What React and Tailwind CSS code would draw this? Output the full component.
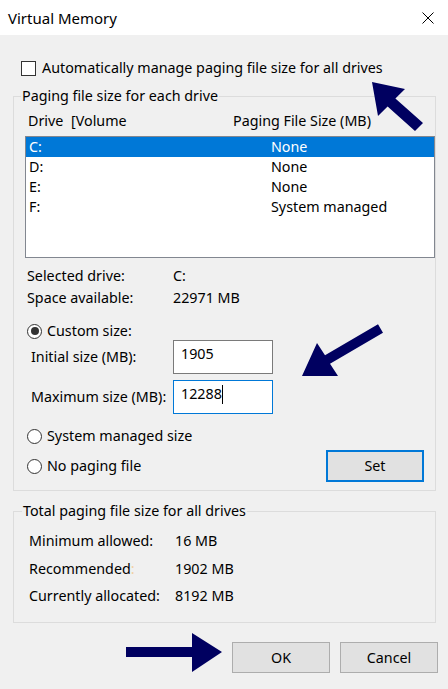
import React from "react";

const font = { fontFamily: '"Noto Sans", "Open Sans", sans-serif' };

const Radio = ({ checked }) => (
  <span className="flex size-[15px] shrink-0 items-center justify-center rounded-full border border-[#333] bg-white">
    {checked && <span className="size-[8px] rounded-full bg-[#333]" />}
  </span>
);

const drives = [
  ["C:", "None"],
  ["D:", "None"],
  ["E:", "None"],
  ["F:", "System managed"],
];

const Arrows = () => (
  <svg className="pointer-events-none absolute inset-0 h-full w-full" viewBox="0 0 448 689">
    <polygon fill="#000060" points="372,82 405,89 395.4,98.6 423,123 415,131 387.6,106.4 378,116" />
    <polygon fill="#000060" points="302,376 317,343 325,355.2 378,324.2 383,332.8 330,363.8 338,376" />
    <polygon fill="#000060" points="126,647 192,647 192,633 222,652 192,672 192,657 126,657" />
  </svg>
);

export default function App() {
  return (
    <div className="relative h-[689px] w-[448px] overflow-hidden bg-[#f0f0f0] text-[14.3px] leading-[20px] text-black" style={font}>
      {/* title bar */}
      <div className="flex h-[35px] items-center justify-between bg-white pl-[8px] pr-[14px]">
        <span className="text-[15px]">Virtual Memory</span>
        <svg width="12" height="12" viewBox="0 0 12 12">
          <path d="M0.5 0.5 L11.5 11.5 M11.5 0.5 L0.5 11.5" stroke="#000" strokeWidth="1" />
        </svg>
      </div>

      <div className="pt-[23px]">
        <label className="ml-[21px] flex h-[20px] items-center gap-[6px]">
          <span className="size-[15px] border border-[#333] bg-white" />
          <span>Automatically manage paging file size for all drives</span>
        </label>

        {/* paging file per drive */}
        <fieldset className="ml-[13px] mt-[8px] w-[423px] border border-[#dcdcdc]">
          <legend className="ml-[7px] px-[1px]">Paging file size for each drive</legend>
          <div className="pb-[8px] pl-[11px]">
            <div className="mt-[5px] flex h-[20px] items-center">
              <span className="ml-[3px] w-[43px]">Drive</span>
              <span className="w-[162px]">[Volume</span>
              <span>Paging File Size (MB)</span>
            </div>
            <div className="mt-[5px] h-[122px] w-[410px] border border-[#828790] bg-white">
              {drives.map(([d, s], i) => (
                <div
                  key={d}
                  className={
                    i === 0
                      ? "flex h-[20px] items-center bg-[#0078d7] text-white"
                      : "flex h-[20px] items-center"
                  }
                >
                  <span className="w-[245px] pl-[3px]">{d}</span>
                  <span>{s}</span>
                </div>
              ))}
            </div>

            <div className="mt-[8px] flex h-[20px] items-center">
              <span className="ml-[2px] w-[146px]">Selected drive:</span>
              <span>C:</span>
            </div>
            <div className="mt-[2px] flex h-[20px] items-center">
              <span className="ml-[2px] w-[146px]">Space available:</span>
              <span>22971 MB</span>
            </div>

            <label className="ml-[2px] mt-[14px] flex h-[18px] items-center gap-[5px]">
              <Radio checked />
              <span>Custom size:</span>
            </label>
            <div className="flex h-[34px] items-center">
              <span className="ml-[6px] w-[142px]">Initial size (MB):</span>
              <div className="h-[34px] w-[100px] border border-[#7a7a7a] bg-white pl-[7px] pt-[3px]">1905</div>
            </div>
            <div className="mt-[6px] flex h-[34px] items-center">
              <span className="ml-[6px] w-[142px]">Maximum size (MB):</span>
              <div className="flex h-[34px] w-[100px] items-start border border-[#0078d7] bg-white pl-[7px] pt-[3px]">
                <span>12288</span>
                <span className="mt-[1px] h-[19px] w-px bg-black" />
              </div>
            </div>

            <label className="ml-[2px] mt-[12px] flex h-[20px] items-center gap-[5px]">
              <Radio />
              <span>System managed size</span>
            </label>
            <div className="mt-[4px] flex h-[32px] items-center justify-between">
              <label className="ml-[2px] flex items-center gap-[5px]">
                <Radio />
                <span>No paging file</span>
              </label>
              <button className="mr-[11px] h-[32px] w-[98px] border-2 border-[#0078d7] bg-[#e1e1e1] font-normal">Set</button>
            </div>
          </div>
        </fieldset>

        {/* totals */}
        <fieldset className="ml-[13px] mt-[10px] w-[423px] border border-[#dcdcdc]">
          <legend className="ml-[8px] px-[1px]">Total paging file size for all drives</legend>
          <div className="pb-[16px] pl-[15px]">
            <div className="mt-[10px] flex h-[20px] items-center">
              <span className="w-[146px]">Minimum allowed:</span>
              <span>16 MB</span>
            </div>
            <div className="mt-[8px] flex h-[20px] items-center">
              <span className="w-[146px]">
                Recommended<span className="text-[#f0cfa0]">:</span>
              </span>
              <span>1902 MB</span>
            </div>
            <div className="mt-[7px] flex h-[20px] items-center">
              <span className="w-[146px]">Currently allocated:</span>
              <span>8192 MB</span>
            </div>
          </div>
        </fieldset>

        <div className="mt-[19px] flex justify-end gap-[10px] pr-[10px]">
          <button className="h-[31px] w-[98px] border border-[#adadad] bg-[#e1e1e1] font-normal">OK</button>
          <button className="h-[31px] w-[98px] border border-[#adadad] bg-[#e1e1e1] font-normal">Cancel</button>
        </div>
      </div>

      <Arrows />
    </div>
  );
}
